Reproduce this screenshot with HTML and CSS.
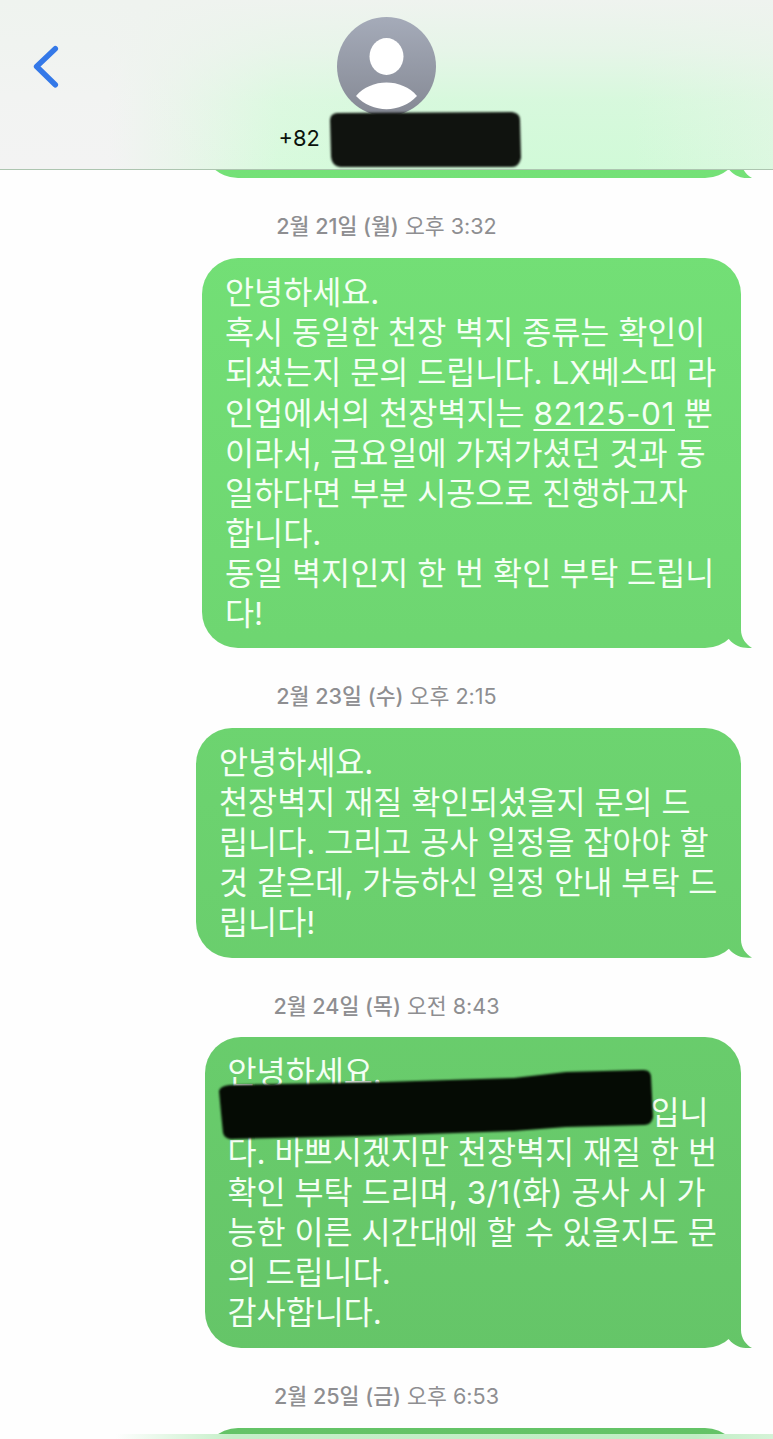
FILE: index.html
```
<!DOCTYPE html>
<html lang="ko-KR">

<head>
  <meta charset="UTF-8">
  <meta name="viewport" content="width=device-width, initial-scale=1.0">
  <title>메시지</title>
  <link rel="stylesheet" href="styles.css">
</head>

<body>
  <header class="top">
    <button class="back" type="button" aria-label="뒤로">
      <svg width="28" height="44" viewBox="0 0 28 44">
        <path d="M24.300 3.700 5.600 21.500 24.300 39.800" fill="none" stroke="#3478e8" stroke-width="5.500" stroke-linecap="round" stroke-linejoin="round" />
      </svg>
    </button>
    <div class="contact">
      <svg class="avatar" width="99" height="99" viewBox="0 0 99 99">
        <defs>
          <linearGradient id="avatar-bg" x1="0" y1="0" x2="0" y2="1">
            <stop offset="0" stop-color="#a5abb9" />
            <stop offset="1" stop-color="#858994" />
          </linearGradient>
        </defs>
        <circle cx="49.5" cy="49.5" r="49.5" fill="url(#avatar-bg)" />
        <ellipse cx="49.5" cy="39.5" rx="17" ry="18.5" fill="#fff" />
        <path d="M19 79C34 61 65 61 80 79C64 96.500 35 96.500 19 79Z" fill="#fff" />
      </svg>
      <p class="number">+82
        <svg class="mark" width="196" height="60" viewBox="0 0 196 60">
          <path d="M10 3 185 2Q193 3 193 10L194 48Q192 57 185 57L13 57Q5 56 4 47L3 10Q3 4 10 3Z" fill="#10130f" />
        </svg>
      </p>
    </div>
  </header>

  <main class="chat">
    <div class="bubble prev"></div>

    <time class="date"><b>2월 21일 (월)</b> 오후 3:32</time>
    <p class="bubble first">
      <span>안녕하세요.</span>
      <span>혹시 동일한 천장 벽지 종류는 확인이</span>
      <span>되셨는지 문의 드립니다. LX베스띠 라</span>
      <span>인업에서의 천장벽지는 <u>82125-01</u> 뿐</span>
      <span>이라서, 금요일에 가져가셨던 것과 동</span>
      <span>일하다면 부분 시공으로 진행하고자</span>
      <span>합니다.</span>
      <span>동일 벽지인지 한 번 확인 부탁 드립니</span>
      <span>다!</span>
    </p>

    <time class="date"><b>2월 23일 (수)</b> 오후 2:15</time>
    <p class="bubble second">
      <span>안녕하세요.</span>
      <span>천장벽지 재질 확인되셨을지 문의 드</span>
      <span>립니다. 그리고 공사 일정을 잡아야 할</span>
      <span>것 같은데, 가능하신 일정 안내 부탁 드</span>
      <span>립니다!</span>
    </p>

    <time class="date"><b>2월 24일 (목)</b> 오전 8:43</time>
    <p class="bubble third">
      <span>안녕하세요.</span>
      <span><i class="hidden-text"><svg class="mark" width="440" height="76" viewBox="0 0 440 76">
            <path d="M3 24Q4 19 14 18L168 15 298 11 350 5 426 3Q434 2 435 9L437 50Q436 57 429 58L350 60 298 64 153 69 18 72Q9 73 7 66L5 46Z" fill="#050b04" />
          </svg></i>입니</span>
      <span>다. 바쁘시겠지만 천장벽지 재질 한 번</span>
      <span>확인 부탁 드리며, 3/1(화) 공사 시 가</span>
      <span>능한 이른 시간대에 할 수 있을지도 문</span>
      <span>의 드립니다.</span>
      <span>감사합니다.</span>
    </p>

    <time class="date"><b>2월 25일 (금)</b> 오후 6:53</time>
    <div class="bubble next"></div>
  </main>
  <div class="bottom"></div>
</body>

</html>
```
FILE: styles.css
```
* {
  box-sizing: border-box;
  margin: 0;
  padding: 0;
}

body {
  position: relative;
  height: 1439px;
  overflow: hidden;
  background: #fefefe;
  font-family: Inter, "Noto Sans CJK KR", sans-serif;
}

.top {
  position: relative;
  z-index: 1;
  display: grid;
  grid-template-columns: 1fr 240px 1fr;
  height: 170px;
  border-bottom: 1px solid #adc5b0;
  background:
    linear-gradient(to bottom, #eff3ef 0%, rgba(239, 243, 239, .7) 30%, rgba(239, 243, 239, .2) 60%, rgba(239, 243, 239, 0) 100%),
    linear-gradient(to right, #f3f3f3 14%, #eaf5eb 23%, #d8fadd 36%, #d1fad8 55%, #d1fad8 82%, #dcf8e0 100%);
}

.back {
  justify-self: start;
  align-self: start;
  margin: 45px 0 0 31px;
  border: 0;
  background: none;
}

.back svg,
.avatar {
  display: block;
}

.contact {
  display: flex;
  flex-direction: column;
  align-items: center;
  padding-top: 16.5px;
}

.number {
  position: relative;
  align-self: flex-start;
  margin-left: 12px;
  line-height: 44px;
  font-size: 21.8px;
  color: #0b120c;
}

.number .mark {
  position: absolute;
  left: 48px;
  top: -6px;
  filter: blur(1px);
}

.chat {
  display: flex;
  flex-direction: column;
  align-items: flex-end;
  height: 1269px;
  padding-right: 32px;
  overflow: hidden;
}

/* one gradient runs down the whole screen behind every bubble */
.bubble,
.bubble::after {
  background: linear-gradient(#76e579, #64c367) fixed;
}

.bubble {
  position: relative;
  flex-shrink: 0;
  padding: 15.5px 0 0 23px;
  border-radius: 36px;
  line-height: 40.1px;
  font-size: 31.6px;
  font-weight: 400;
  color: #f4fff4;
  white-space: nowrap;
}

.bubble::after {
  content: "";
  position: absolute;
  right: -11px;
  bottom: 0;
  width: 37px;
  height: 40px;
  clip-path: path("M26 0V22C26 30 31 37 37 40C29 41 20 39 14 31.500L0 20V0Z");
}

.bubble span {
  display: block;
  height: 40.1px;
}

.bubble u {
  letter-spacing: .5px;
  text-decoration-thickness: 2px;
  text-underline-offset: 4px;
}

.prev {
  width: 539px;
  height: 90px;
  margin-top: -82px;
}

.first {
  width: 539px;
  height: 390px;
}

.second {
  width: 545px;
  height: 230px;
}

.third {
  width: 536.5px;
  height: 310.5px;
}

.next {
  width: 539px;
  height: 90px;
}

.date {
  align-self: center;
  flex-shrink: 0;
  height: 79.8px;
  margin-right: -32px;
  padding-top: 28px;
  line-height: 40px;
  font-size: 21.6px;
  color: #8e8e91;
}

.date b {
  font-weight: 500;
}

.hidden-text {
  position: relative;
  display: inline-block;
  width: 423px;
  height: 30px;
}

.hidden-text .mark {
  position: absolute;
  left: -12px;
  top: -27px;
  filter: blur(1px);
}

.bottom {
  position: absolute;
  left: 0;
  right: 0;
  bottom: 0;
  height: 5px;
  background: linear-gradient(to right, #fefefe 15%, #c5efc8 30%, #c0eec4 90%, #d5f3d7);
}
```
